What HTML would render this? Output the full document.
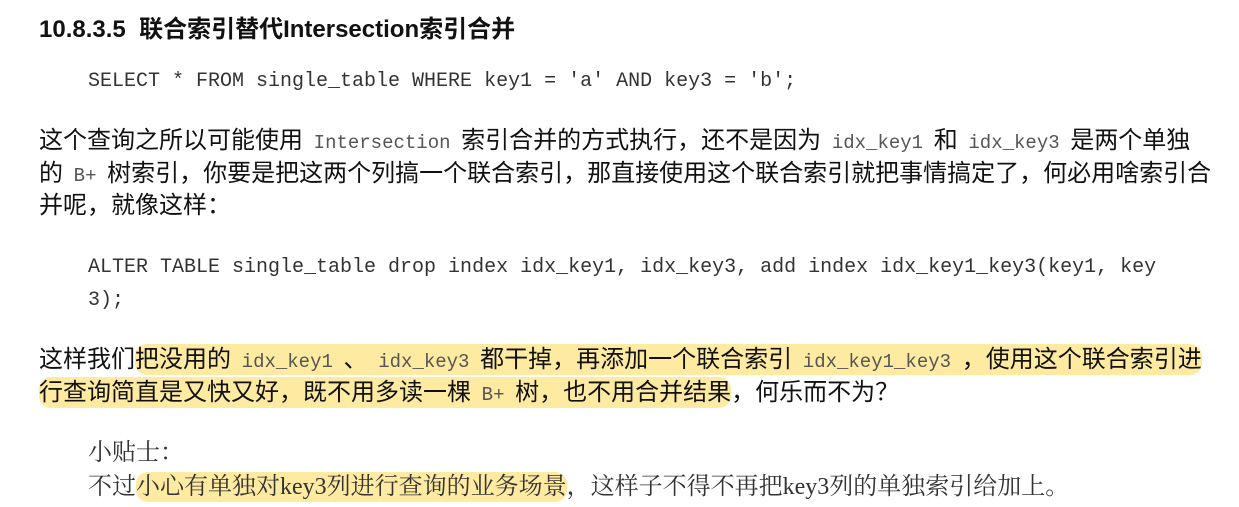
<!DOCTYPE html>
<html><head><meta charset="utf-8"><style>
body{margin:0;width:1239px;height:507px;background:#fff;position:relative;overflow:hidden;font-family:"Liberation Sans","Noto Sans CJK SC",sans-serif;color:#111}
.l{position:absolute;white-space:nowrap;line-height:32px}
.p{font-size:24px;left:39px}
.c{font-family:"Liberation Mono","Noto Sans CJK SC",monospace;font-size:19px;color:#555;margin:0 4px}
.code{font-family:"Liberation Mono",monospace;font-size:20px;color:#333;left:88px}
.h{background:#feeaa0;border-radius:12px;padding:2px 0}
.t{font-family:"Liberation Serif","Noto Serif CJK SC",serif;font-size:24px;color:#333;left:88px}
</style></head><body>
<div class="l" style="left:39px;top:14px;font-size:24px;font-weight:bold">10.8.3.5&nbsp; 联合索引替代Intersection索引合并</div>
<div class="l code" style="top:66px">SELECT * FROM single_table WHERE key1 = 'a' AND key3 = 'b';</div>
<div class="l p" style="top:125px">这个查询之所以可能使用 <span class="c">Intersection</span> 索引合并的方式执行，还不是因为 <span class="c">idx_key1</span> 和 <span class="c">idx_key3</span> 是两个单独</div>
<div class="l p" style="top:158px">的 <span class="c">B+</span> 树索引，你要是把这两个列搞一个联合索引，那直接使用这个联合索引就把事情搞定了，何必用啥索引合</div>
<div class="l p" style="top:190px">并呢，就像这样：</div>
<div class="l code" style="top:252px">ALTER TABLE single_table drop index idx_key1, idx_key3, add index idx_key1_key3(key1, key</div>
<div class="l code" style="top:285px">3);</div>
<div class="l p" style="top:344px">这样我们<span class="h">把没用的 <span class="c">idx_key1</span> 、 <span class="c">idx_key3</span> 都干掉，再添加一个联合索引 <span class="c">idx_key1_key3</span> ，使用这个联合索引进</span></div>
<div class="l p" style="top:377px"><span class="h">行查询简直是又快又好，既不用多读一棵 <span class="c">B+</span> 树，也不用合并结果</span>，何乐而不为？</div>
<div class="l t" style="top:437px">小贴士：</div>
<div class="l t" style="top:471px">不过<span class="h">小心有单独对key3列进行查询的业务场景</span>，这样子不得不再把key3列的单独索引给加上。</div>
</body></html>
